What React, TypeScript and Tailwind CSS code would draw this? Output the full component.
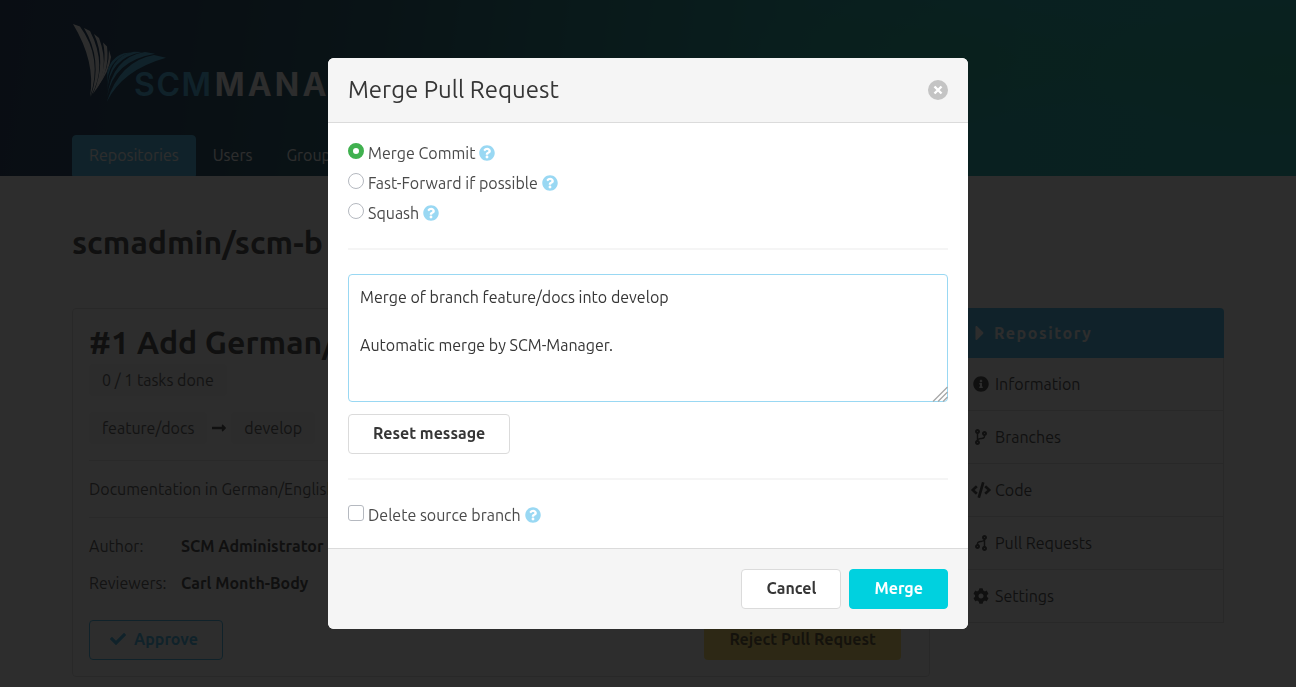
import type { ReactNode } from "react";
import { useId, useState } from "react";
import {
  FaCaretRight,
  FaCheck,
  FaCode,
  FaCodeBranch,
  FaCog,
  FaInfoCircle,
  FaLongArrowAltRight,
  FaQuestionCircle,
} from "react-icons/fa";

const DEFAULT_MESSAGE = "Merge of branch feature/docs into develop\n\nAutomatic merge by SCM-Manager.";

function Logo() {
  return (
    <a href="#" aria-label="SCM-Manager" className="flex h-20 items-start">
      <svg viewBox="0 0 96 80" className="h-20 w-24 shrink-0" aria-hidden="true">
        <g fill="#ffffff">
          <path d="M1 0 L8 2.5 Q31 34 18 73 Q24 38 1 0Z" />
          <path d="M12 4 L18 7 Q36 42 19 72 Q31 36 12 4Z" />
          <path d="M22 10 L27 14 Q39 46 21 70 Q35 38 22 10Z" />
          <path d="M31 18.5 L35 22.5 Q38 48 23 67 Q36.5 42 31 18.5Z" />
          <path d="M37 26 L39 33 Q37 48 26 62 Q37.5 44 37 26Z" />
        </g>
        <g fill="#33b2e8">
          <path d="M94 33.7 L82 31 Q48 37 34.7 78 Q50 46 94 33.7Z" />
          <path d="M83 29.8 L73 28 Q40 33 35 74 Q40.5 37 83 29.8Z" />
          <path d="M70 28 L62 27.8 Q36 32 35.3 68 Q36.8 34 70 28Z" />
          <path d="M58.5 28.5 L52 29.3 Q33 35 35.4 63 Q34 36 58.5 28.5Z" />
          <path d="M48 31 L43.5 34 Q33.5 42 35 57 Q34.5 41 48 31Z" />
        </g>
      </svg>
      <span className="-ml-[34px] mt-[41px] font-['Inter',sans-serif] text-[32px] leading-10 font-semibold tracking-wider text-[#33b2e8]">
        SCM<span className="ml-[2px] font-bold tracking-widest text-white">MANAGER</span>
      </span>
    </a>
  );
}

function NavTab({ label, active = false }: { label: string; active?: boolean }) {
  return (
    <a
      href="#"
      className={
        active
          ? "rounded-t border border-[#33b2e8] bg-[#33b2e8] px-4 pt-[7px] pb-2 text-white"
          : "border border-transparent px-4 pt-[7px] pb-2 text-white"
      }
    >
      {label}
    </a>
  );
}

function Tag({ children }: { children: ReactNode }) {
  return <span className="flex h-8 items-center rounded bg-[#f5f5f5] px-[13px] text-[#4a4a4a]">{children}</span>;
}

function MenuItem({ icon, label }: { icon: ReactNode; label: string }) {
  return (
    <li className="border-b border-[#dbdbdb]">
      <a href="#" className="flex h-[52px] items-center gap-1 pl-4">
        <span className="flex w-5 justify-center">{icon}</span>
        {label}
      </a>
    </li>
  );
}

function Help({ text }: { text: string }) {
  return (
    <span title={text} className="text-[#99d8f3]">
      <FaQuestionCircle aria-label="Help" />
    </span>
  );
}

function Strategy({
  label,
  help,
  checked,
  onSelect,
}: {
  label: string;
  help: string;
  checked: boolean;
  onSelect: () => void;
}) {
  const id = useId();
  return (
    <div className="flex h-6 items-center gap-1">
      <input
        id={id}
        type="radio"
        name="strategy"
        checked={checked}
        onChange={onSelect}
        className="mb-1 size-4 appearance-none rounded-full border border-[#b5b9c0] bg-white checked:border-[5px] checked:border-[#40b14f]"
      />
      <label htmlFor={id}>{label}</label>
      <Help text={help} />
    </div>
  );
}

function MergeDialog() {
  const [strategy, setStrategy] = useState("merge");
  const [message, setMessage] = useState(DEFAULT_MESSAGE);
  const [deleteBranch, setDeleteBranch] = useState(false);
  return (
    <section
      role="dialog"
      aria-modal="true"
      aria-labelledby="dialog-title"
      className="w-full max-w-[640px] overflow-hidden rounded-md bg-white"
    >
      <header className="flex items-center justify-between border-b border-[#dbdbdb] bg-[#f5f5f5] p-5">
        <h2 id="dialog-title" className="text-2xl leading-6 text-[#363636]">
          Merge Pull Request
        </h2>
        <button
          type="button"
          aria-label="Close"
          className="flex size-5 items-center justify-center rounded-full bg-[#c4c4c4] text-white"
        >
          <svg viewBox="0 0 10 10" className="size-[10px]" aria-hidden="true">
            <path d="M1.5 1.5 L8.5 8.5 M8.5 1.5 L1.5 8.5" stroke="currentColor" strokeWidth="2.4" />
          </svg>
        </button>
      </header>

      <div className="px-5 pt-[18px] pb-[21px]">
        <fieldset className="flex flex-col gap-[6px]">
          <legend className="sr-only">Merge strategy</legend>
          <Strategy
            label="Merge Commit"
            help="Creates a merge commit"
            checked={strategy === "merge"}
            onSelect={() => setStrategy("merge")}
          />
          <Strategy
            label="Fast-Forward if possible"
            help="Moves the target branch when possible"
            checked={strategy === "ff"}
            onSelect={() => setStrategy("ff")}
          />
          <Strategy
            label="Squash"
            help="Combines all commits into one"
            checked={strategy === "squash"}
            onSelect={() => setStrategy("squash")}
          />
        </fieldset>

        <hr className="mt-[23px] mb-6 h-[2px] border-0 bg-[#f5f5f5]" />

        <div className="relative">
          <textarea
            aria-label="Commit message"
            value={message}
            onChange={(e) => setMessage(e.target.value)}
            className="block h-32 w-full resize-none rounded border border-[#99d8f3] px-[11px] py-[10px] leading-6 text-[#363636] outline-none"
          />
          <svg
            viewBox="0 0 16 16"
            className="pointer-events-none absolute right-0 bottom-0 size-4"
            aria-hidden="true"
          >
            <path d="M1 15.5 L15.5 1 M6 15.5 L15.5 6 M11 15.5 L15.5 11" stroke="#a8a8a8" strokeWidth="1.3" />
          </svg>
        </div>

        <button
          type="button"
          onClick={() => setMessage(DEFAULT_MESSAGE)}
          className="mt-3 h-10 rounded border border-[#dbdbdb] bg-white px-6 pb-[2px] font-bold text-[#363636]"
        >
          Reset message
        </button>

        <hr className="mt-6 mb-[23px] h-[2px] border-0 bg-[#f5f5f5]" />

        <div className="flex h-6 items-center gap-1">
          <input
            id="delete-branch"
            type="checkbox"
            checked={deleteBranch}
            onChange={(e) => setDeleteBranch(e.target.checked)}
            className="mb-1 size-4 appearance-none rounded-[3px] border border-[#b5b9c0] bg-white checked:bg-[#40b14f]"
          />
          <label htmlFor="delete-branch">Delete source branch</label>
          <Help text="Deletes the source branch after the merge" />
        </div>
      </div>

      <footer className="flex justify-end gap-2 border-t border-[#dbdbdb] bg-[#f5f5f5] p-5">
        <button
          type="button"
          className="h-10 rounded border border-[#dbdbdb] bg-white px-6 pb-[2px] font-bold text-[#363636]"
        >
          Cancel
        </button>
        <button
          type="button"
          className="h-10 rounded border border-[#00d1df] bg-[#00d1df] px-6 pb-[2px] font-bold text-white"
        >
          Merge
        </button>
      </footer>
    </section>
  );
}

export default function App() {
  return (
    <div className="min-h-screen bg-white font-['Ubuntu','Noto_Sans',sans-serif] text-base leading-6 text-[#4a4a4a]">
      <header className="bg-[radial-gradient(ellipse_220px_80px_at_1280px_70px,#00b07c90_0%,transparent_100%),radial-gradient(ellipse_240px_70px_at_960px_60px,#00a87890_0%,transparent_100%),linear-gradient(98deg,#04204c_0%,#00304e_15%,#00485c_28%,#006c74_42%,#009490_60%,#00a6a6_78%,#00a8a4_100%)]">
        <div className="mx-auto max-w-[1152px] pt-6">
          <Logo />
          <nav className="mt-[31px] flex">
            <NavTab label="Repositories" active />
            <NavTab label="Users" />
            <NavTab label="Groups" />
          </nav>
        </div>
      </header>

      <main className="mx-auto max-w-[1152px] pt-12">
        <h1 className="text-[32px] leading-9 font-bold text-[#363636]">scmadmin/scm-b</h1>

        <div className="-mx-3 mt-12 flex items-start">
          <div className="w-3/4 px-3">
            <article className="rounded border border-[#dbdbdb] px-4 pt-[15px] pb-4">
              <h2 className="text-[32px] leading-9 font-bold text-[#363636]">#1 Add German/English docs</h2>
              <div className="mt-1 flex">
                <Tag>0 / 1 tasks done</Tag>
              </div>
              <div className="mt-4 flex items-center gap-1">
                <Tag>feature/docs</Tag>
                <FaLongArrowAltRight className="size-4 text-[#363636]" />
                <Tag>develop</Tag>
              </div>
              <p className="my-4 border-y border-[#e4e4e4] py-4">Documentation in German/English</p>
              <dl className="grid grid-cols-[92px_1fr] gap-y-[13px]">
                <dt>Author:</dt>
                <dd className="font-bold text-[#363636]">SCM Administrator</dd>
                <dt>Reviewers:</dt>
                <dd className="font-bold text-[#363636]">Carl Month-Body</dd>
              </dl>
              <div className="mt-[25px] flex justify-between pr-3">
                <button
                  type="button"
                  className="flex h-10 items-center gap-2 rounded border border-[#33b2e8] pr-6 pb-[2px] pl-5 font-bold text-[#33b2e8]"
                >
                  <FaCheck />
                  Approve
                </button>
                <button type="button" className="h-10 rounded bg-[#ffdd57] px-[25px] pb-[2px] font-bold text-black/70">
                  Reject Pull Request
                </button>
              </div>
            </article>
          </div>

          <aside className="w-1/4 px-3">
            <nav className="text-[#363636]">
              <h2 className="flex h-[50px] items-center gap-1 rounded-t bg-[#33b2e8] pl-4 font-bold tracking-widest text-white">
                <span className="flex w-5 justify-center">
                  <FaCaretRight className="size-6" />
                </span>
                Repository
              </h2>
              <ul className="border-x border-[#dbdbdb]">
                <MenuItem icon={<FaInfoCircle />} label="Information" />
                <MenuItem icon={<FaCodeBranch />} label="Branches" />
                <MenuItem icon={<FaCode className="w-5 shrink-0" />} label="Code" />
                <MenuItem icon={<FaCodeBranch className="rotate-180" />} label="Pull Requests" />
                <MenuItem icon={<FaCog />} label="Settings" />
              </ul>
            </nav>
          </aside>
        </div>
      </main>

      <div className="fixed inset-0 flex items-center justify-center bg-[rgba(10,10,10,0.86)]">
        <MergeDialog />
      </div>
    </div>
  );
}
